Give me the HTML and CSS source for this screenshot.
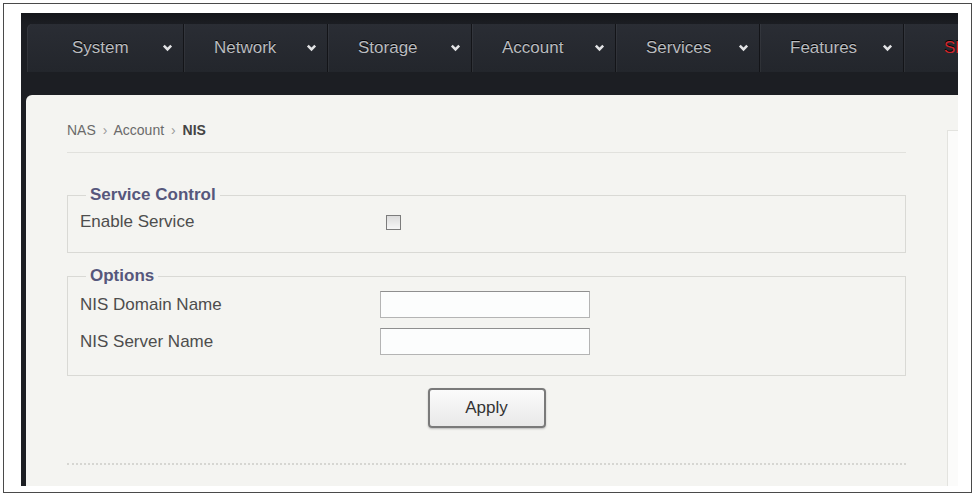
FILE: index.html
```html
<!DOCTYPE html>
<html lang="en">
<head>
    <meta charset="UTF-8">
    <title>NAS - Account - NIS</title>

    <link rel="stylesheet" href="styles.css">
</head>

<body>

<div class="frame">
    <div class="app">

        <!-- top menu -->
        <ul class="nav">
            <li class="nav-item first">System <svg class="chev" viewBox="0 0 12 8"><polyline points="2,1.5 6,5.5 10,1.5"/></svg></li>
            <li class="nav-item">Network <svg class="chev" viewBox="0 0 12 8"><polyline points="2,1.5 6,5.5 10,1.5"/></svg></li>
            <li class="nav-item">Storage <svg class="chev" viewBox="0 0 12 8"><polyline points="2,1.5 6,5.5 10,1.5"/></svg></li>
            <li class="nav-item">Account <svg class="chev" viewBox="0 0 12 8"><polyline points="2,1.5 6,5.5 10,1.5"/></svg></li>
            <li class="nav-item">Services <svg class="chev" viewBox="0 0 12 8"><polyline points="2,1.5 6,5.5 10,1.5"/></svg></li>
            <li class="nav-item">Features <svg class="chev" viewBox="0 0 12 8"><polyline points="2,1.5 6,5.5 10,1.5"/></svg></li>
            <li class="nav-item last">Shutdown</li>
        </ul> <!-- end nav -->

        <div class="panel">
            <div class="content">

                <div class="breadcrumb">
                    NAS <span class="sep">&rsaquo;</span> Account <span class="sep">&rsaquo;</span> <b>NIS</b>
                </div>

                <form id="nisForm" name="nisForm" method="post" action="">
                    <fieldset class="group service">
                        <legend>Service Control</legend>
                        <div class="row">
                            <label for="enableService">Enable Service</label>
                            <input type="checkbox" name="enableService" id="enableService"/>
                        </div>
                    </fieldset>

                    <fieldset class="group options">
                        <legend>Options</legend>
                        <div class="row">
                            <label for="nisDomain">NIS Domain Name</label>
                            <input type="text" name="nisDomain" id="nisDomain"/>
                        </div>
                        <div class="row">
                            <label for="nisServer">NIS Server Name</label>
                            <input type="text" name="nisServer" id="nisServer"/>
                        </div>
                    </fieldset>

                    <div class="actions">
                        <input type="button" name="apply" id="apply1" value="Apply"/>
                    </div>
                </form>

                <div class="footer-line"></div>

            </div> <!-- end content -->
            <div class="aside"></div>
        </div> <!-- end panel -->

    </div> <!-- end app -->
</div> <!-- end frame -->

</body>
</html>
```

FILE: styles.css
```css
html, body {
    margin: 0;
    height: 100%;
    background-color: #ffffff;
}

body {
    font-family: "Liberation Sans", Arial, sans-serif;
    color: #4a4a4a;
}

.frame {
    box-sizing: border-box;
    height: 490px;
    margin: 3px 4px 2px 3px;
    border: 1px solid #4a4a4a;
    padding: 9px 13px 6px 17px;
    display: flex;
}

.app {
    flex: 1;
    min-width: 0;
    overflow: hidden;
    display: flex;
    flex-direction: column;
    background-color: #1c1e23;
}

/* top menu */

.nav {
    list-style: none;
    margin: 0;
    height: 82px;
    padding: 11px 0 0 6px;
    box-sizing: border-box;
    display: flex;
    overflow: hidden;
    background: linear-gradient(#14161a, #1c1e23 14%, #1c1e23);
}

.nav-item {
    flex: none;
    box-sizing: border-box;
    width: 144px;
    height: 48px;
    padding: 0 10px 0 30px;
    display: flex;
    align-items: center;
    justify-content: space-between;
    font-size: 17px;
    color: #b9bbbf;
    text-shadow: 0 -1px 0 #000;
    background: linear-gradient(#2a2d34, #23262c);
    border-right: 1px solid #131418;
    box-shadow: inset 1px 0 0 rgba(255, 255, 255, 0.05);
}

.nav-item.first {
    width: 157px;
    padding-left: 45px;
    border-top-left-radius: 5px;
}

.nav-item.last {
    width: 200px;
    padding-left: 40px;
    color: #d0262c;
    border-right: none;
}

.chev {
    width: 11px;
    height: 8px;
}

.chev polyline {
    fill: none;
    stroke: #e2e3e5;
    stroke-width: 2.8;
}

/* page body */

.panel {
    flex: 1;
    display: flex;
    margin-left: 5px;
    background-color: #f4f4f1;
    border-top-left-radius: 6px;
}

.content {
    flex: 1;
    min-width: 0;
    padding: 0 41px 0 41px;
}

.aside {
    width: 10px;
    margin-top: 35px;
    background-color: #fbfbfa;
    border-left: 1px solid #e3e3df;
    border-top: 1px solid #e3e3df;
}

.breadcrumb {
    padding: 26px 0 13px 0;
    line-height: 18px;
    font-size: 14px;
    color: #6a6a6a;
    border-bottom: 1px solid #e1e1dd;
}

.breadcrumb .sep {
    margin: 0 3px;
    color: #9a9a9a;
}

.breadcrumb b {
    color: #444;
}

form {
    margin: 0;
}

.group {
    margin: 32px 0 0 0;
    padding: 4px 12px 17px 12px;
    border: 1px solid #d9d9d5;
}

.group legend {
    margin-left: 6px;
    padding: 0 4px;
    line-height: 20px;
    font-size: 17px;
    font-weight: bold;
    color: #56577c;
}

.group.options {
    margin-top: 13px;
    padding-top: 5px;
    padding-bottom: 20px;
}

.row {
    display: flex;
    align-items: center;
    min-height: 26px;
}

.options .row {
    height: 27px;
}

.options .row + .row {
    margin-top: 10px;
}

.row label {
    width: 300px;
    font-size: 17px;
    color: #4d4d4d;
}

#enableService {
    -webkit-appearance: none;
    appearance: none;
    width: 15px;
    height: 15px;
    margin: 0 0 0 6px;
    border: 1px solid #7c7c7c;
    background: linear-gradient(#dcdcdc, #f6f6f6);
}

.row input[type="text"] {
    box-sizing: border-box;
    width: 210px;
    height: 27px;
    margin: 0;
    border: 1px solid #b4b4b4;
    border-top-color: #8f8f8f;
    background-color: #fcfdfd;
}

.actions {
    padding-top: 12px;
    text-align: center;
}

#apply1 {
    width: 118px;
    height: 40px;
    font-family: "Liberation Sans", Arial, sans-serif;
    font-size: 17px;
    color: #333;
    border: 2px solid #7a7a7a;
    border-radius: 4px;
    background: linear-gradient(#fbfbfb, #e9e9e9);
    box-shadow: 0 1px 2px #bbb;
    cursor: pointer;
}

#apply1:hover {
    background: #f0f0f0;
}

.footer-line {
    margin-top: 35px;
    border-top: 2px dotted #d6d6d2;
}
```
